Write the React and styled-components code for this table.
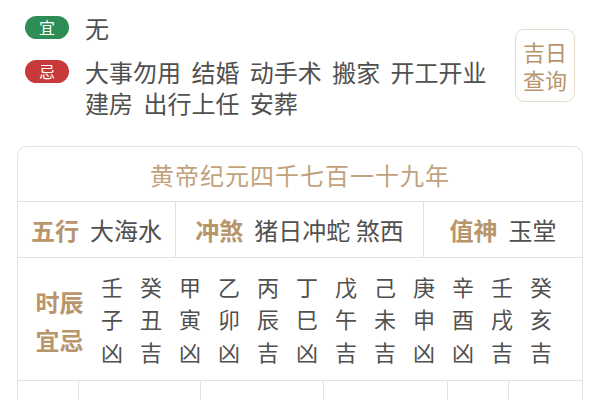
import React from 'react';
import styled, { createGlobalStyle } from 'styled-components';

const GlobalStyle = createGlobalStyle`
  body {
    margin: 0;
    background: #ffffff;
    font-family: "Noto Sans CJK SC", "Noto Sans", sans-serif;
    color: #505050;
  }
`;

const TAN = '#b8956b';
const LINE = '#e6e1da';

const Page = styled.div`
  width: 600px;
  height: 400px;
  overflow: hidden;
`;

const Top = styled.div`
  display: flex;
  align-items: center;
  justify-content: space-between;
  padding: 12px 25px 0 25px;
  height: 106px;
`;

const Lists = styled.div`
  display: flex;
  flex-direction: column;
  gap: 13px;
  flex: 1;
`;

const ListRow = styled.div`
  display: flex;
  align-items: flex-start;
`;

const Pill = styled.span`
  flex: none;
  width: 44px;
  height: 23px;
  margin-top: 4px;
  border-radius: 12px;
  background: ${(p) => (p.$bad ? '#c8393b' : '#2e8d55')};
  color: #fff;
  font-size: 16px;
  line-height: 23px;
  text-align: center;
`;

const ListText = styled.div`
  margin-left: 16px;
  font-size: 24px;
  line-height: 31px;
  word-spacing: 5px;
  max-width: 420px;
  color: #505050;
`;

const QueryBox = styled.div`
  width: 58px;
  height: 71px;
  border: 1px solid #e8dccb;
  border-radius: 9px;
  color: ${TAN};
  font-size: 22px;
  line-height: 28px;
  display: flex;
  flex-direction: column;
  align-items: center;
  justify-content: center;
`;

const Table = styled.div`
  margin: 28px 17px 0 17px;
  border: 1px solid ${LINE};
  border-radius: 10px 10px 0 0;
`;

const TitleRow = styled.div`
  height: 54px;
  display: flex;
  align-items: center;
  justify-content: center;
  font-size: 24px;
  letter-spacing: 1px;
  color: #c2a27c;
  border-bottom: 1px solid ${LINE};
`;

const InfoRow = styled.div`
  display: grid;
  grid-template-columns: 157px 248px 1fr;
  height: 55px;
  border-bottom: 1px solid ${LINE};
`;

const InfoCell = styled.div`
  display: flex;
  align-items: center;
  justify-content: center;
  gap: 11px;
  font-size: 24px;
  & + & {
    border-left: 1px solid ${LINE};
  }
`;

const Label = styled.span`
  color: ${TAN};
  font-weight: 700;
`;

const HourRow = styled.div`
  display: flex;
  align-items: center;
  height: 122px;
  border-bottom: 1px solid ${LINE};
`;

const HourLabel = styled.div`
  width: 83px;
  display: flex;
  flex-direction: column;
  align-items: center;
  font-size: 24px;
  line-height: 38px;
  font-weight: 700;
  color: ${TAN};
  margin-top: 4px;
`;

const HourGrid = styled.div`
  display: grid;
  grid-template-columns: repeat(12, 39px);
  font-size: 22px;
  line-height: 32.5px;
  color: #505050;
  margin-top: -1px;
`;

const HourCell = styled.span`
  text-align: left;
`;

const BottomRow = styled.div`
  display: grid;
  grid-template-columns: 60px 122px 123px 124px 61px 1fr;
  height: 40px;
`;

const BottomCell = styled.div`
  padding-top: 12px;
  font-size: 22px;
  text-align: center;
  color: ${(p) => (p.$tan ? TAN : '#505050')};
  & + & {
    border-left: 1px solid ${LINE};
  }
`;

const stems = '壬癸甲乙丙丁戊己庚辛壬癸';
const branches = '子丑寅卯辰巳午未申酉戌亥';
const luck = '凶吉凶凶吉凶吉吉凶凶吉吉';

export default function App() {
  return (
    <Page>
      <GlobalStyle />
      <Top>
        <Lists>
          <ListRow>
            <Pill>宜</Pill>
            <ListText>无</ListText>
          </ListRow>
          <ListRow>
            <Pill $bad>忌</Pill>
            <ListText>大事勿用 结婚 动手术 搬家 开工开业 建房 出行上任 安葬</ListText>
          </ListRow>
        </Lists>
        <QueryBox>
          <span>吉日</span>
          <span>查询</span>
        </QueryBox>
      </Top>
      <Table>
        <TitleRow>黄帝纪元四千七百一十九年</TitleRow>
        <InfoRow>
          <InfoCell>
            <Label>五行</Label>
            <span>大海水</span>
          </InfoCell>
          <InfoCell>
            <Label>冲煞</Label>
            <span>猪日冲蛇 煞西</span>
          </InfoCell>
          <InfoCell>
            <Label>值神</Label>
            <span>玉堂</span>
          </InfoCell>
        </InfoRow>
        <HourRow>
          <HourLabel>
            <span>时辰</span>
            <span>宜忌</span>
          </HourLabel>
          <HourGrid>
            {[...stems].map((c, i) => <HourCell key={'s' + i}>{c}</HourCell>)}
            {[...branches].map((c, i) => <HourCell key={'b' + i}>{c}</HourCell>)}
            {[...luck].map((c, i) => <HourCell key={'l' + i}>{c}</HourCell>)}
          </HourGrid>
        </HourRow>
        <BottomRow>
          <BottomCell />
          <BottomCell>大林木林</BottomCell>
          <BottomCell $tan>今日胎神</BottomCell>
          <BottomCell>仓库栖外</BottomCell>
          <BottomCell />
          <BottomCell />
        </BottomRow>
      </Table>
    </Page>
  );
}
